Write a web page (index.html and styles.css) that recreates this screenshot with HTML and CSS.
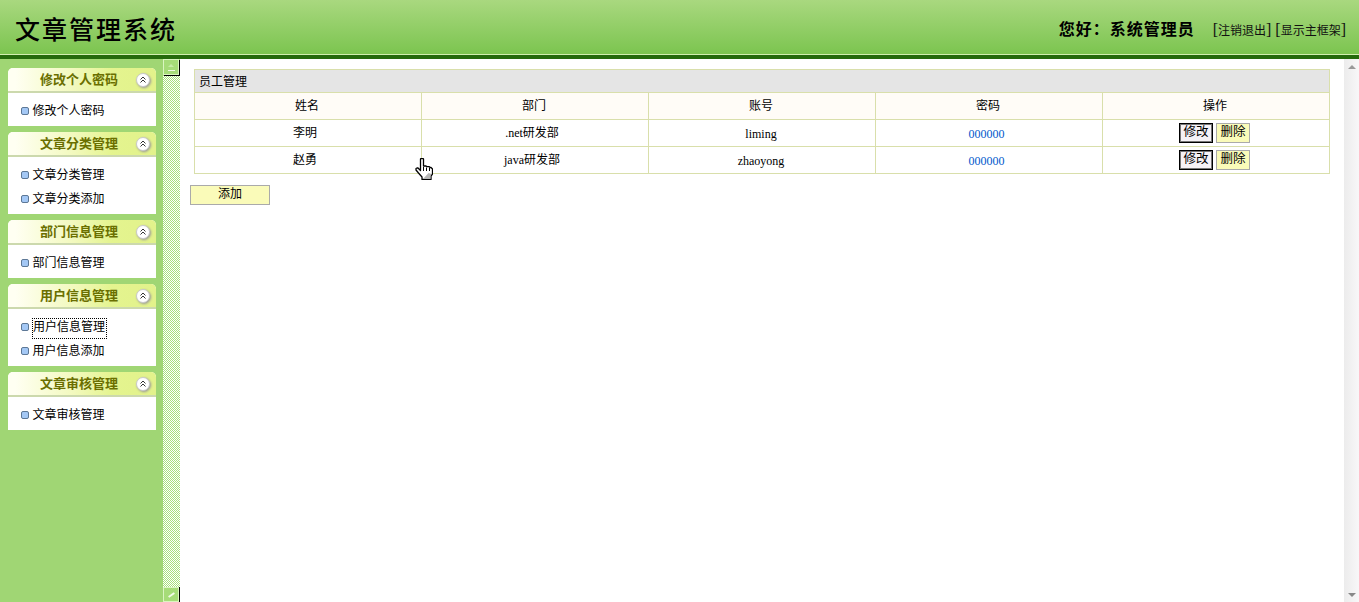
FILE: index.html
```html
<!DOCTYPE html>
<html lang="zh">
<head>
<meta charset="utf-8">
<title>文章管理系统</title>
<link rel="stylesheet" href="styles.css">
</head>
<body>
<header class="top">
  <h1 class="brand">文章管理系统</h1>
  <div class="user">
    <span class="hello">您好：系统管理员</span>
    <a class="toplink"><span class="br">[</span>注销退出<span class="br">]</span></a>
    <a class="toplink"><span class="br">[</span>显示主框架<span class="br">]</span></a>
  </div>
</header>
<div class="main">
  <aside class="side">
    <section class="panel">
      <h2 class="panel-head"><span>修改个人密码</span><svg class="chev" viewBox="0 0 14 14"><circle cx="7" cy="7" r="6.5" fill="#fff" stroke="#c9c9c9"/><path d="M4.5 6.500 7 4l2.500 2.500M4.500 9.500 7 7l2.500 2.500" fill="none" stroke="#333" stroke-width="1"/></svg></h2>
      <ul class="panel-body"><li class="item">修改个人密码</li></ul>
    </section>
    <section class="panel">
      <h2 class="panel-head"><span>文章分类管理</span><svg class="chev" viewBox="0 0 14 14"><circle cx="7" cy="7" r="6.5" fill="#fff" stroke="#c9c9c9"/><path d="M4.5 6.500 7 4l2.500 2.500M4.500 9.500 7 7l2.500 2.500" fill="none" stroke="#333" stroke-width="1"/></svg></h2>
      <ul class="panel-body"><li class="item">文章分类管理</li><li class="item">文章分类添加</li></ul>
    </section>
    <section class="panel">
      <h2 class="panel-head"><span>部门信息管理</span><svg class="chev" viewBox="0 0 14 14"><circle cx="7" cy="7" r="6.5" fill="#fff" stroke="#c9c9c9"/><path d="M4.5 6.500 7 4l2.500 2.500M4.500 9.500 7 7l2.500 2.500" fill="none" stroke="#333" stroke-width="1"/></svg></h2>
      <ul class="panel-body"><li class="item">部门信息管理</li></ul>
    </section>
    <section class="panel">
      <h2 class="panel-head"><span>用户信息管理</span><svg class="chev" viewBox="0 0 14 14"><circle cx="7" cy="7" r="6.5" fill="#fff" stroke="#c9c9c9"/><path d="M4.5 6.500 7 4l2.500 2.500M4.500 9.500 7 7l2.500 2.500" fill="none" stroke="#333" stroke-width="1"/></svg></h2>
      <ul class="panel-body"><li class="item"><span class="focus">用户信息管理</span></li><li class="item">用户信息添加</li></ul>
    </section>
    <section class="panel">
      <h2 class="panel-head"><span>文章审核管理</span><svg class="chev" viewBox="0 0 14 14"><circle cx="7" cy="7" r="6.5" fill="#fff" stroke="#c9c9c9"/><path d="M4.5 6.500 7 4l2.500 2.500M4.500 9.500 7 7l2.500 2.500" fill="none" stroke="#333" stroke-width="1"/></svg></h2>
      <ul class="panel-body"><li class="item">文章审核管理</li></ul>
    </section>
  </aside>
  <div class="splitter">
    <div class="split-btn split-up"><i class="tri"></i><i class="dash"></i></div>
    <div class="split-btn split-down"><i class="tick"></i></div>
  </div>
  <main class="content">
    <table class="grid">
      <tr class="title-row"><td colspan="5">员工管理</td></tr>
      <tr class="head-row"><td>姓名</td><td>部门</td><td>账号</td><td>密码</td><td>操作</td></tr>
      <tr><td class="name">李明</td><td class="dept"><span class="lat">.net</span>研发部</td><td class="lat acct">liming</td><td class="pw">000000</td><td class="op-cell"><div class="ops"><button class="btn btn-focus">修改</button><button class="btn">删除</button></div></td></tr>
      <tr><td class="name">赵勇</td><td class="dept"><span class="lat">java</span>研发部</td><td class="lat acct">zhaoyong</td><td class="pw">000000</td><td class="op-cell"><div class="ops"><button class="btn btn-focus">修改</button><button class="btn">删除</button></div></td></tr>
    </table>
    <button class="btn add">添加</button>
  </main>
  <div class="scrollbar"><i class="arrow"></i><i class="arrow-down"></i></div>
</div>
<svg class="cursor" viewBox="0 0 18 22" width="18" height="22"><path d="M5.500 1 6 .5h2l.5.5v7H11l1 .6h2l1 .9h1l1.500 1.500v5L16 18v3.500H7V19l-3.500-4L1 12v-1.500l1-.5h1l2.500 2.500z" fill="#fff" stroke="#000" stroke-width="1.300" stroke-linejoin="round"/><path d="M8.500 9v4M11.500 9.500V13M14.500 10v3" stroke="#000" stroke-width="1" fill="none"/><path d="M8 21h7.500v-3l1-2-3-1z" fill="#b5b5b5"/></svg>
</body>
</html>
```
FILE: styles.css
```css
* { box-sizing: border-box; }
html, body { margin: 0; padding: 0; height: 100%; overflow: hidden; }
body {
  font-family: "Noto Sans CJK SC", "Liberation Sans", sans-serif;
  font-size: 12px;
  color: #000;
  background: #fff;
  display: flex;
  flex-direction: column;
}
.top {
  height: 59px;
  flex: none;
  display: flex;
  align-items: center;
  justify-content: space-between;
  padding: 0 13px 0 15px;
  background: linear-gradient(#a9d87f 0, #7fc653 50px, #7cc44f 54px, #d2efb0 54px, #d2efb0 55px, #256a0c 55px, #256a0c 59px);
}
.brand {
  margin: 0 0 4px;
  font-size: 25px;
  line-height: 32px;
  font-weight: 500;
  letter-spacing: 2px;
}
.user { display: flex; align-items: center; gap: 4px; }
.hello { font-size: 16px; font-weight: 700; letter-spacing: 1px; margin-right: 14px; margin-bottom: 3px; }
.toplink { font-size: 12px; display: flex; align-items: center; color: #111; }
.br { font-family: "Liberation Serif", serif; font-size: 16px; }
.main { flex: 1; display: flex; min-height: 0; }
.side {
  width: 163px;
  flex: none;
  background: #a0d674;
  padding: 9px 7px 0 8px;
  display: flex;
  flex-direction: column;
  gap: 6px;
}
.panel { background: #fff; border-radius: 5px 5px 0 0; }
.panel-head {
  height: 25px;
  margin: 0;
  border-radius: 5px 5px 0 0;
  border-bottom: 2px solid #ccd9ad;
  background: linear-gradient(90deg, #fffff2 5%, #f2f9bd 45%, #e4f48f 70%, #e2f28b 100%);
  color: #6a6f00;
  font-size: 13px;
  font-weight: 700;
  display: flex;
  align-items: center;
  justify-content: space-between;
  padding: 0 6px 0 32px;
}
.panel-head span { margin-bottom: 2px; }
.chev { width: 14px; height: 14px; filter: drop-shadow(1px 1px 1px #999); }
.panel-body { list-style: none; margin: 0; padding: 5px 0 4px; }
.item {
  height: 24px;
  padding-left: 24.500px;
  line-height: 24px;
  position: relative;
}
.item::before {
  content: "";
  position: absolute;
  left: 13px;
  top: 9px;
  width: 6px;
  height: 6px;
  border: 1px solid #5d7896;
  border-radius: 2px;
  background: #a4c8f5;
}
.focus {
  display: block;
  width: 73px;
  height: 19px;
  margin-left: .5px;
  line-height: 14px;
  position: relative;
  top: 5px;
  outline: 1px dotted #000;
}
.splitter {
  width: 17px;
  flex: none;
  display: flex;
  flex-direction: column;
  justify-content: space-between;
  background-image: url("data:image/svg+xml,%3Csvg xmlns='http://www.w3.org/2000/svg' width='2' height='2' shape-rendering='crispEdges'%3E%3Crect width='2' height='2' fill='%23ffffff'/%3E%3Crect width='1' height='1' fill='%23a8e07c'/%3E%3Crect x='1' y='1' width='1' height='1' fill='%23a8e07c'/%3E%3C/svg%3E");
  background-size: 2px 2px;
}
.split-btn {
  height: 17px;
  width: 16px;
  background: #a6dc78;
  border: 1px solid #daf5c0;
  display: flex;
  flex-direction: column;
  align-items: center;
  justify-content: center;
  gap: 3px;
  box-shadow: 1px 0 0 #000;
}
.split-up { box-shadow: 1px 1px 0 #000; height: 16px; }
.split-down { height: 15px; }
.tri { border: 3px solid transparent; border-top: 0; border-bottom: 3px solid #c5eba5; }
.dash { width: 7px; height: 1px; background: #f2fbe8; }
.tick { width: 7px; height: 2px; background: #f2fbe8; transform: rotate(-35deg); }
.content { flex: 1; min-width: 0; padding: 10px 14px 0 10px; background: #fff; }
.grid {
  width: 1136px;
  margin-left: 4px;
  border-collapse: collapse;
  table-layout: fixed;
}
.grid td {
  border: 1px solid #d9dfab;
  height: 27px;
  padding: 0 2px 2px 0;
  text-align: center;
  vertical-align: middle;
}
.grid .title-row td { height: 23px; background: #e5e5e5; text-align: left; padding-left: 4px; }
.grid .head-row td { background: #fffcf7; padding-bottom: 4px; }
.grid .name { padding: 0 6px 4px 0; }
.grid .dept { padding-right: 6px; }
.grid .acct { padding: 2px 2px 0 0; }
.lat { font-family: "Liberation Serif", serif; }
.grid .pw { font-family: "Liberation Serif", serif; color: #0058cc; padding: 2px 5px 0 0; }
.grid .op-cell { padding: 0; }
.ops { display: flex; justify-content: center; gap: 3px; padding-right: 3px; }
.btn {
  width: 34px;
  height: 20px;
  padding: 0 0 7px;
  border: 1px solid #aaa;
  background: #fafbb9;
  font: 12.500px "Noto Sans CJK SC", sans-serif;
  color: #000;
  line-height: 14px;
}
.btn-focus { border: 1px solid #000; box-shadow: inset 0 0 0 1px #777; background: #f6f2f6; }
.add { display: block; width: 80px; margin-top: 11px; padding-bottom: 5px; font-size: 12px; }
.scrollbar {
  width: 15px;
  flex: none;
  position: relative;
  background: linear-gradient(90deg, #ececec, #f8f7f8);
}
.arrow {
  position: absolute;
  left: 4px;
  top: 6px;
  border: 4px solid transparent;
  border-top: 0;
  border-bottom: 4px solid #999;
}
.arrow-down {
  position: absolute;
  left: 4px;
  bottom: 5px;
  border: 4px solid transparent;
  border-bottom: 0;
  border-top: 4px solid #888;
}
.cursor { position: absolute; left: 415px; top: 158px; }
```
